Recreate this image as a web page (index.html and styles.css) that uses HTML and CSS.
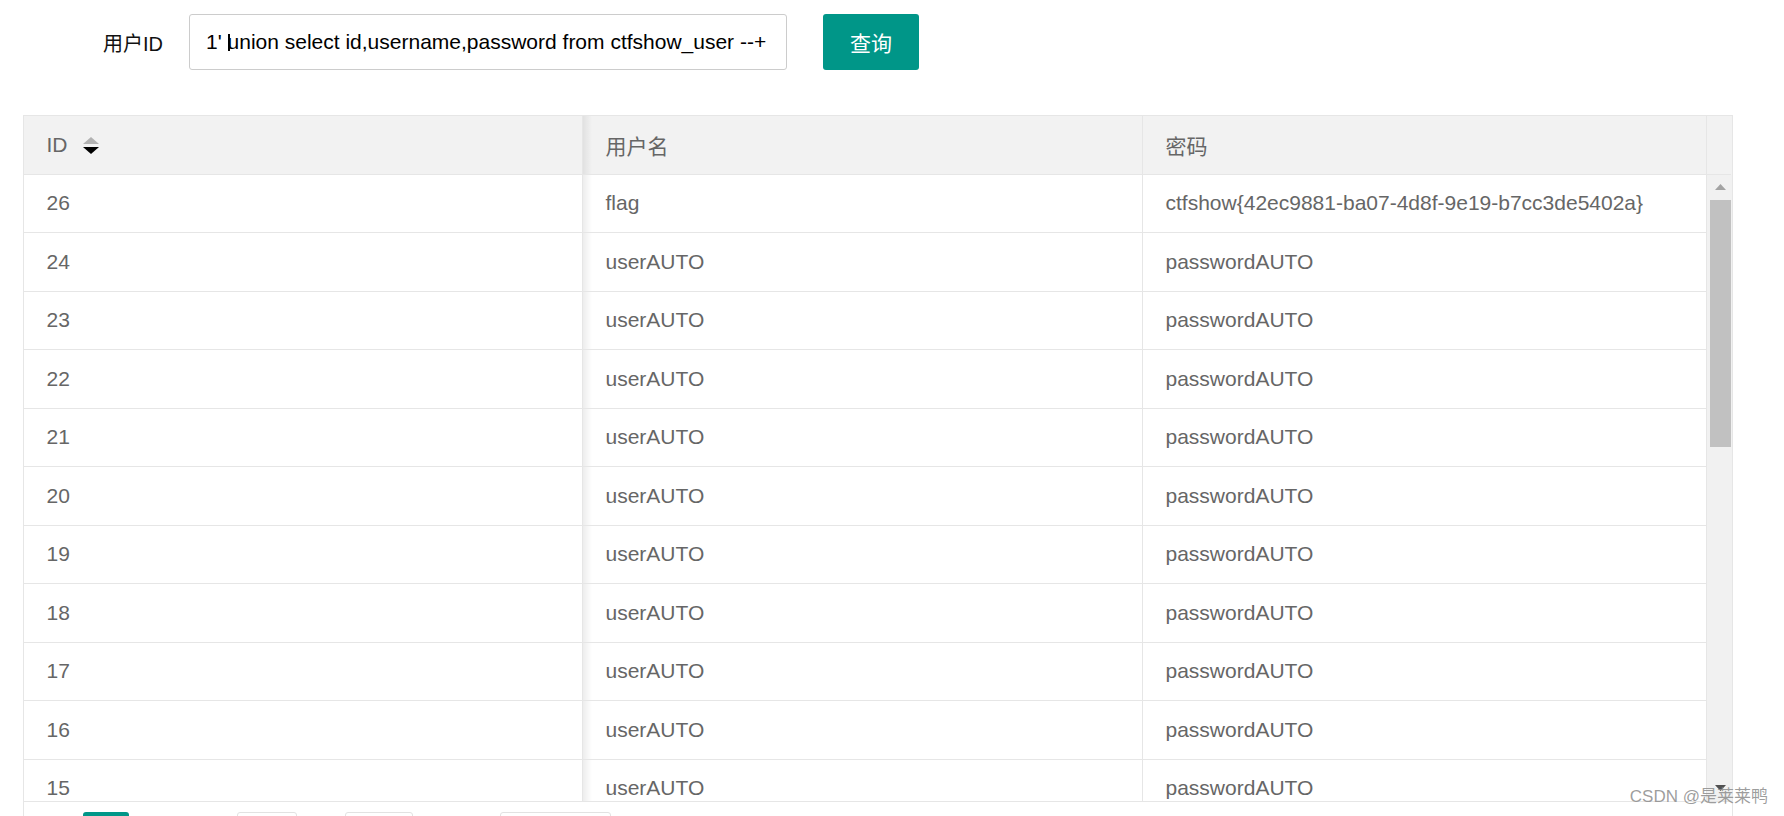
FILE: index.html
```html
<!DOCTYPE html>
<html lang="zh-CN">
<head>
<meta charset="utf-8">
<title>ctfshow 查询</title>
<link rel="stylesheet" href="styles.css">
</head>
<body>
<div class="page">
  <form class="search">
    <label class="search-label">用户ID</label>
    <div class="search-input">1' <span class="caret"></span>union select id,username,password from ctfshow_user --+</div>
    <button class="search-btn" type="button">查询</button>
  </form>

  <div class="table">
    <div class="thead">
      <div class="th c1">ID
        <svg class="sort" width="16" height="17" viewBox="0 0 16 17">
          <polygon points="0,7 8,0 16,7" fill="#b2b2b2"/>
          <polygon points="0,10 16,10 8,17" fill="#000"/>
        </svg>
      </div>
      <div class="th c2">用户名</div>
      <div class="th c3">密码</div>
      <div class="th gutter"></div>
    </div>

    <div class="tbody">
      <div class="rows">
        <div class="tr"><div class="td c1">26</div><div class="td c2">flag</div><div class="td c3">ctfshow{42ec9881-ba07-4d8f-9e19-b7cc3de5402a}</div></div>
        <div class="tr"><div class="td c1">24</div><div class="td c2">userAUTO</div><div class="td c3">passwordAUTO</div></div>
        <div class="tr"><div class="td c1">23</div><div class="td c2">userAUTO</div><div class="td c3">passwordAUTO</div></div>
        <div class="tr"><div class="td c1">22</div><div class="td c2">userAUTO</div><div class="td c3">passwordAUTO</div></div>
        <div class="tr"><div class="td c1">21</div><div class="td c2">userAUTO</div><div class="td c3">passwordAUTO</div></div>
        <div class="tr"><div class="td c1">20</div><div class="td c2">userAUTO</div><div class="td c3">passwordAUTO</div></div>
        <div class="tr"><div class="td c1">19</div><div class="td c2">userAUTO</div><div class="td c3">passwordAUTO</div></div>
        <div class="tr"><div class="td c1">18</div><div class="td c2">userAUTO</div><div class="td c3">passwordAUTO</div></div>
        <div class="tr"><div class="td c1">17</div><div class="td c2">userAUTO</div><div class="td c3">passwordAUTO</div></div>
        <div class="tr"><div class="td c1">16</div><div class="td c2">userAUTO</div><div class="td c3">passwordAUTO</div></div>
        <div class="tr"><div class="td c1">15</div><div class="td c2">userAUTO</div><div class="td c3">passwordAUTO</div></div>
      </div>
      <div class="scrollbar">
        <div class="sb-btn">
          <svg width="11" height="6" viewBox="0 0 11 6"><polygon points="0,6 5.5,0 11,6" fill="#a3a3a3"/></svg>
        </div>
        <div class="sb-track"><div class="sb-thumb"></div></div>
        <div class="sb-btn">
          <svg width="11" height="6" viewBox="0 0 11 6"><polygon points="0,0 11,0 5.5,6" fill="#505050"/></svg>
        </div>
      </div>
    </div>

    <div class="pager">
      <span class="pg-gap pg-prev"></span>
      <span class="pg-curr"></span>
      <span class="pg-gap pg-next"></span>
      <span class="pg-box pg-input"></span>
      <span class="pg-gap pg-page"></span>
      <span class="pg-box pg-ok"></span>
      <span class="pg-gap pg-count"></span>
      <span class="pg-box pg-limit"></span>
    </div>
  </div>

  <div class="watermark">CSDN @是莱莱鸭</div>
</div>
</body>
</html>
```

FILE: styles.css
```css
html, body {
  margin: 0;
  padding: 0;
  height: 816px;
  overflow: hidden;
  background: #fff;
}

body {
  font-family: "Liberation Sans", Arial, "Noto Sans CJK SC", sans-serif;
}

.page {
  position: relative;
  height: 816px;
}

/* search form */
.search {
  display: flex;
  align-items: center;
  margin: 0;
  padding-top: 14px;
  height: 56px;
}

.search-label {
  margin-left: 103px;
  width: 60px;
  margin-right: 26px;
  font-size: 20px;
  color: #111;
  white-space: nowrap;
}

.search-input {
  box-sizing: border-box;
  width: 598px;
  height: 56px;
  border: 1px solid #ccc;
  border-radius: 3px;
  padding-left: 16px;
  font-size: 21px;
  line-height: 54px;
  color: #000;
  white-space: pre;
  overflow: hidden;
}

.caret {
  display: inline-block;
  width: 2px;
  height: 17px;
  margin-right: -2px;
  background: #000;
  vertical-align: -2px;
}

.search-btn {
  box-sizing: border-box;
  margin-left: 36px;
  width: 96px;
  height: 56px;
  border: none;
  border-radius: 3px;
  background: #009688;
  color: #fff;
  font-family: "Noto Sans CJK SC", sans-serif;
  font-size: 21px;
  padding: 0;
}

/* table */
.table {
  box-sizing: border-box;
  margin-top: 45px;
  margin-left: 23px;
  width: 1710px;
  border: 1px solid #e6e6e6;
  border-bottom: none;
  font-size: 21px;
  color: #666;
}

.thead {
  display: grid;
  grid-template-columns: 559px 560px 564px 24px;
  background: #f2f2f2;
}

.th {
  box-sizing: border-box;
  height: 58.5px;
  display: flex;
  align-items: center;
  padding: 0 22.5px;
  border-right: 1px solid #e6e6e6;
  border-bottom: 1px solid #e6e6e6;
  font-family: "Liberation Sans", "Noto Sans CJK SC", sans-serif;
}

.th.gutter {
  border-right: none;
  padding: 0;
}

.th.c2, .td.c2 {
  background-image: linear-gradient(to right, rgba(0, 0, 0, 0.07), rgba(0, 0, 0, 0) 9px);
}

.sort {
  margin-left: 15px;
  margin-top: 1px;
}

.tbody {
  display: flex;
  border-bottom: 1px solid #e6e6e6;
}

.rows {
  width: 1683px;
  height: 626px;
  overflow: hidden;
}

.tr {
  display: grid;
  grid-template-columns: 559px 560px 564px;
}

.td {
  box-sizing: border-box;
  height: 58.5px;
  display: flex;
  align-items: center;
  padding: 0 22.5px;
  border-right: 1px solid #e6e6e6;
  border-bottom: 1px solid #e6e6e6;
  white-space: nowrap;
}

/* drawn scrollbar */
.scrollbar {
  width: 25px;
  height: 626px;
  display: flex;
  flex-direction: column;
  background: #f1f1f1;
}

.sb-btn {
  height: 25px;
  display: flex;
  align-items: center;
  justify-content: center;
  padding-left: 2px;
}

.sb-track {
  flex: 1;
  padding: 0 1px 0 3px;
}

.sb-thumb {
  height: 247px;
  background: #c1c1c1;
}

/* pager (only its top edge is in view) */
.pager {
  display: flex;
  align-items: flex-start;
  padding: 10px 0 0 11px;
}

.pg-gap {
  height: 39px;
}

.pg-prev { width: 48px; }
.pg-next { width: 108px; }
.pg-page { width: 48px; }
.pg-count { width: 87px; }

.pg-curr {
  width: 46px;
  height: 39px;
  background: #009688;
  border-radius: 3px;
}

.pg-box {
  box-sizing: border-box;
  height: 39px;
  border: 1px solid #e2e2e2;
  border-radius: 3px;
}

.pg-input { width: 60px; }
.pg-ok { width: 68px; }
.pg-limit { width: 111px; }

/* watermark overlay */
.watermark {
  position: absolute;
  right: 16px;
  top: 785px;
  font-size: 17px;
  line-height: 24px;
  color: rgba(140, 140, 140, 0.85);
  font-family: "Liberation Sans", "Noto Sans CJK SC", sans-serif;
  white-space: nowrap;
}
```
